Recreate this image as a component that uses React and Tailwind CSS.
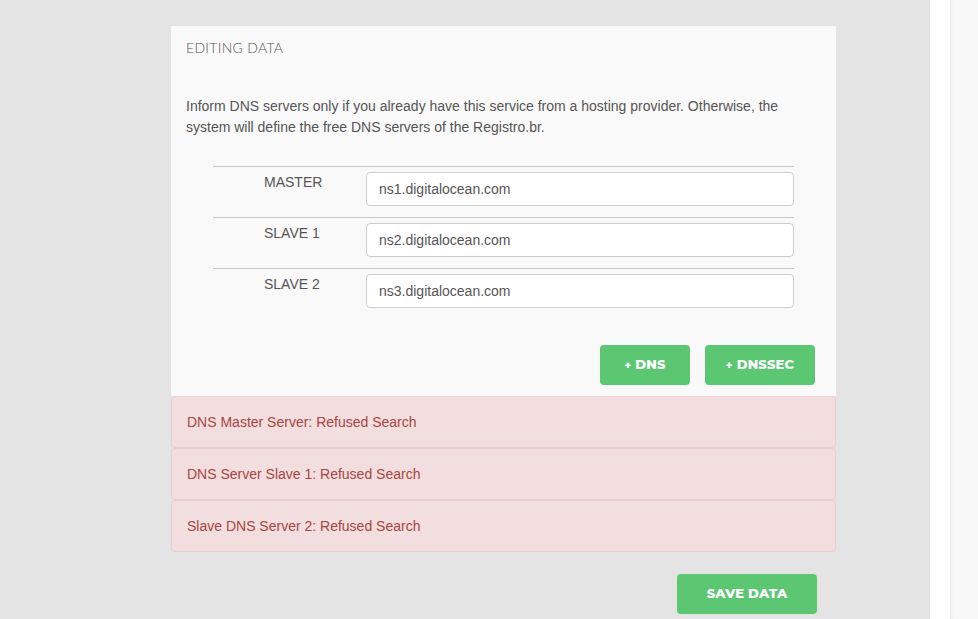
const servers = [
  { label: "MASTER", value: "ns1.digitalocean.com" },
  { label: "SLAVE 1", value: "ns2.digitalocean.com" },
  { label: "SLAVE 2", value: "ns3.digitalocean.com" },
];

const errors = [
  "DNS Master Server: Refused Search",
  "DNS Server Slave 1: Refused Search",
  "Slave DNS Server 2: Refused Search",
];

function GreenButton({ children, className = "" }) {
  return (
    <button
      className={`h-[40px] rounded-[4px] bg-[#5bc773] text-white text-[13px] font-extrabold tracking-[0.2px] flex items-center justify-center ${className}`}
      style={{ fontFamily: "Montserrat, 'Open Sans', sans-serif" }}
    >
      {children}
    </button>
  );
}

export default function App() {
  return (
    <div
      className="flex h-[619px] w-[978px] overflow-hidden text-[14px] text-[#555]"
      style={{ fontFamily: "'Liberation Sans', Arial, sans-serif" }}
    >
      <div className="w-[930px] bg-[#e4e4e4] pl-[171px] pt-[26px]">
        <div className="w-[665px]">
          <div className="bg-[#f9f9f9] px-[15px] pt-[13px] pb-[11px]">
            <div
              className="text-[14px] leading-[18px] text-[#555] font-light tracking-[0.3px]"
              style={{ fontFamily: "Lato, 'Open Sans', sans-serif" }}
            >
              EDITING DATA
            </div>
            <p className="mt-[39px] leading-[21px] text-[#555]">
              Inform DNS servers only if you already have this service from a hosting provider. Otherwise, the system will define the free DNS servers of the Registro.br.
            </p>
            <div className="mx-[27px] mt-[28px]">
              {servers.map((s) => (
                <div key={s.label} className="flex border-t border-[#c8c8c8] pt-[5px] pb-[11px]">
                  <div className="w-[153px] pl-[51px] leading-[20px] text-[#555]">{s.label}</div>
                  <div className="flex-1 h-[34px] rounded-[4px] border border-[#ccc] bg-white px-[12px] flex items-center text-[#555]">
                    {s.value}
                  </div>
                </div>
              ))}
            </div>
            <div className="flex justify-end gap-[15px] mt-[26px] mr-[6px]">
              <GreenButton className="w-[90px]">
                <span className="text-[11px] mr-[4px]">+</span>DNS
              </GreenButton>
              <GreenButton className="w-[110px]">
                <span className="text-[11px] mr-[4px]">+</span>DNSSEC
              </GreenButton>
            </div>
          </div>
          {errors.map((e) => (
            <div
              key={e}
              className="h-[52px] border border-[#ebccd1] rounded-[4px] bg-[#f2dede] text-[#a94442] px-[15px] flex items-center"
            >
              {e}
            </div>
          ))}
          <div className="flex justify-end mt-[22px] mr-[19px]">
            <GreenButton className="w-[140px]">SAVE DATA</GreenButton>
          </div>
        </div>
      </div>
      <div className="w-[20px] bg-white" />
      <div className="flex-1 bg-[#f8f8f8] shadow-[inset_3px_0_3px_-2px_rgba(0,0,0,0.08)]" />
    </div>
  );
}
